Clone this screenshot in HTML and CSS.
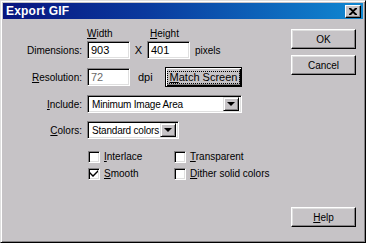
FILE: index.html
```html
<!DOCTYPE html>
<html lang="en">
  <head>
    <meta charset="UTF-8" />
    <title>Export GIF</title>
    <link rel="stylesheet" href="styles.css">
  </head>
  <body>
    <div class="window">
      <div class="titlebar">
        <span class="title">Export GIF</span>
        <span class="close">
          <svg width="8" height="7" viewBox="0 0 8 7">
            <path d="M0 0h2l2 2 2-2h2v1l-3 2.5 3 2.5v1h-2l-2-2-2 2h-2v-1l3-2.5-3-2.5z" fill="#000" />
          </svg>
        </span>
      </div>
      <div class="content">
        <div class="form">
          <div class="row hdr">
            <span class="label"></span>
            <span class="colhead w"><u>W</u>idth</span>
            <span class="colhead"><u>H</u>eight</span>
          </div>
          <div class="row dim">
            <span class="label">Dimensions:</span>
            <span class="field">903</span>
            <span class="times">X</span>
            <span class="field">401</span>
            <span class="unit">pixels</span>
          </div>
          <div class="row res">
            <span class="label"><u>R</u>esolution:</span>
            <span class="field faint">72</span>
            <span class="unit dpi">dpi</span>
            <span class="btn default"><span class="focus"><u>M</u>atch Screen</span></span>
          </div>
          <div class="row inc">
            <span class="label"><u>I</u>nclude:</span>
            <span class="select wide">
              <span class="value">Minimum Image Area</span>
              <span class="arrow"></span>
            </span>
          </div>
          <div class="row col">
            <span class="label"><u>C</u>olors:</span>
            <span class="select narrow">
              <span class="value">Standard colors</span>
              <span class="arrow"></span>
            </span>
          </div>
          <div class="row chk first">
            <span class="label"></span>
            <span class="check-item left"><span class="box"></span><span><u>I</u>nterlace</span></span>
            <span class="check-item"><span class="box"></span><span><u>T</u>ransparent</span></span>
          </div>
          <div class="row chk">
            <span class="label"></span>
            <span class="check-item left">
              <span class="box">
                <svg width="8" height="7" viewBox="0 0 8 7">
                  <path d="M0 2l3 3 5-5v2l-5 5-3-3z" fill="#000" />
                </svg>
              </span>
              <span><u>S</u>mooth</span>
            </span>
            <span class="check-item"><span class="box"></span><span><u>D</u>ither solid colors</span></span>
          </div>
        </div>
        <div class="buttons">
          <span class="btn cmd">OK</span>
          <span class="btn cmd">Cancel</span>
          <span class="btn cmd help"><u>H</u>elp</span>
        </div>
      </div>
    </div>
  </body>
</html>
```
FILE: styles.css
```css
* {
  margin: 0;
  padding: 0;
  box-sizing: border-box;
}

body {
  background-color: #c6c3c6;
  font-family: "Liberation Sans", Arial, sans-serif;
  font-size: 10px;
  color: #000;
}

.window {
  width: 366px;
  height: 243px;
  display: flex;
  flex-direction: column;
  background-color: #c6c3c6;
  border: 1px solid;
  border-color: #dfdfdf #000 #000 #dfdfdf;
  box-shadow: inset 1px 1px #fff, inset -1px -1px #848284;
  padding: 2px;
}

.titlebar {
  height: 16px;
  display: flex;
  align-items: center;
  justify-content: space-between;
  padding: 0 2px 0 3px;
  background: linear-gradient(to right, #08147f, #0a3a9e 40%, #1088d2);
}

.title {
  color: #fff;
  font-weight: bold;
  font-size: 12px;
  letter-spacing: 0.2px;
}

.close {
  width: 16px;
  height: 13px;
  display: flex;
  align-items: center;
  justify-content: center;
  background-color: #c6c3c6;
  border: 1px solid;
  border-color: #fff #000 #000 #fff;
  box-shadow: inset -1px -1px #848284;
}

.content {
  flex: 1;
  display: flex;
  padding: 0 7px 13px 0;
}

.form {
  display: flex;
  flex-direction: column;
}

.row {
  display: flex;
  align-items: center;
  margin-top: 8px;
  white-space: nowrap;
  color: #000;
}

.label {
  width: 84px;
  padding-right: 5px;
  text-align: right;
  flex-shrink: 0;
  color: #000;
}

.hdr {
  height: 12px;
  margin-top: 8px;
}

.colhead.w {
  width: 63px;
}

.dim {
  height: 18px;
  margin-top: 2px;
}

.field {
  height: 18px;
  width: 43px;
  background-color: #fff;
  border: 1px solid;
  border-color: #848284 #fff #fff #848284;
  box-shadow: inset 1px 1px #000, inset -1px -1px #dfdfdf;
  padding: 2px 3px;
  line-height: 12px;
  font-size: 11px;
}

.faint {
  color: #6a6a6a;
}

.times {
  width: 17px;
  text-align: center;
  font-size: 11px;
}

.unit {
  padding-left: 5px;
}

.res {
  height: 20px;
  margin-top: 8px;
}

.dpi {
  width: 35px;
  padding-left: 8px;
  font-size: 11px;
}

.btn {
  display: flex;
  align-items: center;
  justify-content: center;
  background-color: #c6c3c6;
  border: 1px solid;
  border-color: #fff #000 #000 #fff;
  box-shadow: inset -1px -1px #848284, inset 1px 1px #dfdfdf;
}

.default {
  width: 77px;
  height: 20px;
  border-color: #000;
  box-shadow: inset 1px 1px #fff, inset -1px -1px #000, inset -2px -2px #848284;
}

.focus {
  border: 1px dotted #000;
  padding: 0 2px;
  line-height: 11px;
  font-size: 11px;
}

.inc,
.col {
  height: 18px;
}

.col {
  margin-top: 8px;
}

.select {
  height: 18px;
  display: flex;
  align-items: center;
  background-color: #fff;
  border: 1px solid;
  border-color: #848284 #fff #fff #848284;
  box-shadow: inset 1px 1px #000, inset -1px -1px #dfdfdf;
  padding: 2px;
}

.select.wide {
  width: 155px;
}

.select.narrow {
  width: 92px;
}

.value {
  flex: 1;
  padding-left: 2px;
  overflow: hidden;
  letter-spacing: -0.2px;
}

.arrow {
  width: 16px;
  height: 14px;
  flex-shrink: 0;
  display: flex;
  align-items: center;
  justify-content: center;
  background-color: #c6c3c6;
  border: 1px solid;
  border-color: #dfdfdf #000 #000 #dfdfdf;
  box-shadow: inset 1px 1px #fff, inset -1px -1px #848284;
}

.arrow::after {
  content: "";
  border-left: 4px solid transparent;
  border-right: 4px solid transparent;
  border-top: 4px solid #000;
}

.chk {
  height: 13px;
  margin-top: 4px;
}

.chk.first {
  margin-top: 11px;
}

.check-item {
  display: flex;
  align-items: center;
  gap: 4px;
  margin-left: 1px;
}

.check-item.left {
  width: 85px;
}

.box {
  width: 12px;
  height: 12px;
  display: flex;
  align-items: center;
  justify-content: center;
  background-color: #fff;
  border: 1px solid;
  border-color: #848284 #fff #fff #848284;
  box-shadow: inset 1px 1px #000, inset -1px -1px #dfdfdf;
}

.buttons {
  margin-left: auto;
  display: flex;
  flex-direction: column;
  gap: 6px;
  padding-top: 10px;
}

.cmd {
  width: 65px;
  height: 20px;
}

.help {
  margin-top: auto;
}
```
